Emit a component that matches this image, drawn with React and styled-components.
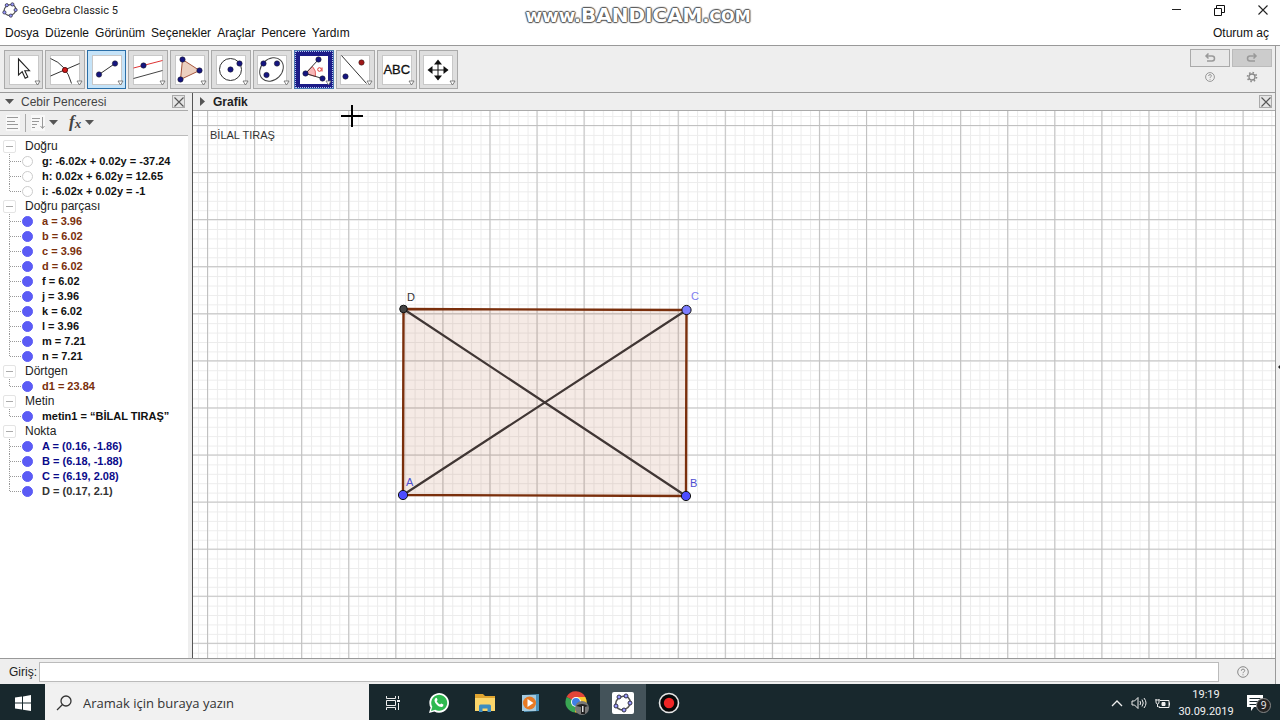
import { useState } from "react";
import styled, { createGlobalStyle } from "styled-components";

const NAVY = "#151580";

const menus = ["Dosya", "Düzenle", "Görünüm", "Seçenekler", "Araçlar", "Pencere", "Yardım"];

const groups = [
    {
        name: "Doğru",
        items: [
            { text: "g: -6.02x + 0.02y = -37.24", hidden: true },
            { text: "h: 0.02x + 6.02y = 12.65", hidden: true },
            { text: "i: -6.02x + 0.02y = -1", hidden: true },
        ],
    },
    {
        name: "Doğru parçası",
        items: [
            { text: "a = 3.96", color: "#7a2f0c" },
            { text: "b = 6.02", color: "#7a2f0c" },
            { text: "c = 3.96", color: "#7a2f0c" },
            { text: "d = 6.02", color: "#7a2f0c" },
            { text: "f = 6.02" },
            { text: "j = 3.96" },
            { text: "k = 6.02" },
            { text: "l = 3.96" },
            { text: "m = 7.21" },
            { text: "n = 7.21" },
        ],
    },
    { name: "Dörtgen", items: [{ text: "d1 = 23.84", color: "#7a2f0c" }] },
    { name: "Metin", items: [{ text: "metin1 = “BİLAL TIRAŞ”" }] },
    {
        name: "Nokta",
        items: [
            { text: "A = (0.16, -1.86)", color: "#0a0a8a" },
            { text: "B = (6.18, -1.88)", color: "#0a0a8a" },
            { text: "C = (6.19, 2.08)", color: "#0a0a8a" },
            { text: "D = (0.17, 2.1)", color: "#333" },
        ],
    },
];

const Dot = ({ x, y, fill = NAVY }) => (
    <circle cx={x} cy={y} r="2.7" fill={fill} stroke="#222" strokeWidth=".5" />
);

const tools = [
    { name: "Taşı", icon: <path d="M11 5.5v16l3.7-3.300 3 6.600 2.600-1.200-3-6.400h4.700z" fill="#fff" stroke="#222" strokeWidth="1.1" /> },
    {
        name: "Kesişim",
        icon: <>
            <path d="M2 5q16 6 21 25M2 22.500L31 10" fill="none" stroke="#333" />
            <circle cx="16.500" cy="16.500" r="2.600" fill="#d01818" stroke="#400" strokeWidth=".8" />
        </>,
    },
    {
        name: "Doğru parçası", active: true,
        icon: <><path d="M8.500 21L24.500 10" stroke="#333" /><Dot x={8.5} y={21} /><Dot x={24.5} y={10} /></>,
    },
    {
        name: "Paralel doğru",
        icon: <>
            <path d="M2 14.500L31 7" stroke="#d33" />
            <path d="M2 25L31 17" stroke="#444" />
            <Dot x={12} y={12} />
        </>,
    },
    {
        name: "Çokgen",
        icon: <>
            <path d="M9 6L26 17 7 26z" fill="#ecd0c0" stroke="#a4543c" />
            <Dot x={9} y={6} /><Dot x={26} y={17} /><Dot x={7} y={26} />
        </>,
    },
    {
        name: "Çember",
        icon: <><circle cx="16" cy="16" r="11" fill="none" stroke="#333" /><Dot x={16} y={16} /><Dot x={25} y={10} /></>,
    },
    {
        name: "Elips",
        icon: <>
            <ellipse cx="16" cy="16" rx="13" ry="10.500" transform="rotate(-45 16 16)" fill="none" stroke="#444" />
            <Dot x={8} y={10} /><Dot x={21.5} y={10} /><Dot x={11} y={21.5} />
        </>,
    },
    {
        name: "Açı", focused: true,
        icon: <>
            <path d="M8 20L15 13q4 4 3 10z" fill="#f8b8b8" stroke="#d44" strokeWidth=".8" />
            <path d="M21 6L8 20 25 25" fill="none" stroke="#333" />
            <circle cx="22" cy="16" r="1.800" fill="none" stroke="#d33" />
            <path d="M24.500 14v4" stroke="#d33" />
            <Dot x={21} y={6} /><Dot x={8} y={20} /><Dot x={25} y={25} />
        </>,
    },
    {
        name: "Yansıt",
        icon: <><path d="M3 2L28 30" stroke="#333" /><Dot x={7} y={23} /><Dot x={23} y={9} fill="#a01818" /></>,
    },
    { name: "Metin", label: "ABC" },
    {
        name: "Grafiği taşı",
        icon: <>
            <path d="M8 16.500h18M16.500 8v18" stroke="#111" />
            <path d="M16.500 6l4 5h-8zM16.500 27l4-5h-8zM6 16.500l5-4v8zM27 16.500l-5-4v8z" fill="#111" />
        </>,
    },
];

function GeoGebraLogo({ size }) {
    const points = [[6, 4], [13, 3], [17, 10], [11, 17], [3, 13]];
    return (
        <svg width={size} height={size} viewBox="0 0 20 20">
            <ellipse cx="10" cy="10" rx="7.500" ry="6.500" transform="rotate(-25 10 10)" fill="none" stroke="#555" strokeWidth="1.5" />
            {points.map(([x, y]) => <circle key={x} cx={x} cy={y} r="2" fill="#9999ff" stroke="#334" />)}
        </svg>
    );
}

function CloseIcon({ size = 10 }) {
    return (
        <svg width={size} height={size} viewBox="0 0 10 10">
            <path d="M.5.500l9 9M9.500.500l-9 9" stroke="currentColor" strokeWidth="1.1" />
        </svg>
    );
}

function HelpIcon({ size = 10 }) {
    return (
        <svg width={size} height={size} viewBox="0 0 12 12" fill="none" stroke="currentColor">
            <circle cx="6" cy="6" r="5.300" />
            <path d="M4.300 4.800q0-1.700 1.700-1.700t1.700 1.500q0 .9-1 1.400-.7.400-.7 1.200M6 8.300v1" />
        </svg>
    );
}

function Guide({ last }) {
    return (
        <svg width="12" height="15">
            <path d={last ? "M.5 0v8" : "M.5 0v15"} stroke="#999" strokeDasharray="1 1" />
            <path d="M1 7.500h11" stroke="#999" strokeDasharray="1 1" />
        </svg>
    );
}

function TitleBar() {
    return (
        <StyledTitleBar>
            <GeoGebraLogo size={16} />
            <h1>GeoGebra Classic 5</h1>
            <WindowButton type="button" aria-label="Küçült">
                <svg width="11" height="11"><path d="M1 4.500h9" stroke="#222" /></svg>
            </WindowButton>
            <WindowButton type="button" aria-label="Geri yükle">
                <svg width="11" height="11" fill="none" stroke="#111">
                    <path d="M.5 3.500h7v7h-7zM2.500 3V.5h8v7H8" />
                </svg>
            </WindowButton>
            <WindowButton type="button" aria-label="Kapat"><CloseIcon /></WindowButton>
            <Watermark>www.<b>BANDICAM</b>.<small>COM</small></Watermark>
        </StyledTitleBar>
    );
}

function ToolBar() {
    return (
        <StyledToolBar>
            <ToolList>
                {tools.map((tool) => (
                    <ToolButton key={tool.name} type="button" aria-label={tool.name} $active={tool.active} $focused={tool.focused}>
                        <ToolFace $focused={tool.focused}>
                            {tool.label ? tool.label : <svg width="30" height="30" viewBox="1.500 1.500 30 30">{tool.icon}</svg>}
                        </ToolFace>
                        <Corner width="7" height="6" viewBox="0 0 7 6">
                            <path d="M1 1h5L3.500 5z" fill="#fff" stroke="#666" strokeWidth=".8" />
                        </Corner>
                    </ToolButton>
                ))}
            </ToolList>
            <SideTools>
                <UndoButton type="button" aria-label="Geri al">
                    <svg width="12" height="10" fill="none" stroke="#999" strokeWidth="1.500">
                        <path d="M2 3h6q2.500 0 2.500 2.500T8 8H3M4.500.500L2 3l2.500 2.500" />
                    </svg>
                </UndoButton>
                <UndoButton type="button" aria-label="Yinele" $disabled>
                    <svg width="12" height="10" fill="none" stroke="#999" strokeWidth="1.500">
                        <path d="M10 3H4Q1.500 3 1.500 5.500T4 8h5M7.500.500L10 3 7.500 5.500" />
                    </svg>
                </UndoButton>
                <PlainButton type="button" aria-label="Yardım"><HelpIcon /></PlainButton>
                <PlainButton type="button" aria-label="Ayarlar">
                    <svg width="12" height="12" fill="none" stroke="#888">
                        <circle cx="6" cy="6" r="3" strokeWidth="1.300" />
                        <circle cx="6" cy="6" r="4.500" strokeWidth="1.600" strokeDasharray="1.500 2.030" />
                    </svg>
                </PlainButton>
            </SideTools>
        </StyledToolBar>
    );
}

function AlgebraPanel() {
    return (
        <StyledAlgebra>
            <PanelHeader>
                <Arrow />
                <h2>Cebir Penceresi</h2>
                <CloseButton type="button" aria-label="Cebir penceresini kapat"><CloseIcon /></CloseButton>
            </PanelHeader>
            <StyleBar>
                <StyleButton type="button" aria-label="Yardımcı nesneler">
                    <StyleIcon width="14" height="16" stroke="#999"><path d="M1 2.500h11M1 6.500h8M1 9.500h11M1 13.500h11" /></StyleIcon>
                </StyleButton>
                <Divider />
                <StyleButton type="button" aria-label="Sırala">
                    <StyleIcon width="14" height="16" fill="none" stroke="#999">
                        <path d="M1 3.500h8M1 6.500h7M1 9.500h5M1 12.500h3M11.500 2v11M9.500 11l2 2.500 2-2.500" />
                    </StyleIcon>
                    <Arrow />
                </StyleButton>
                <StyleButton type="button"><em>f<sub>x</sub></em><Arrow /></StyleButton>
            </StyleBar>
            <Tree>
                {groups.map((group) => (
                    <li key={group.name}>
                        <GroupRow>
                            <Toggle type="button" aria-label={group.name} />
                            {group.name}
                        </GroupRow>
                        <ul>
                            {group.items.map((item, i) => (
                                <TreeItem key={item.text} item={item} last={i === group.items.length - 1} />
                            ))}
                        </ul>
                    </li>
                ))}
            </Tree>
        </StyledAlgebra>
    );
}

function TreeItem({ item, last }) {
    const [visible, setVisible] = useState(!item.hidden);

    return (
        <li>
            <ItemRow $color={item.color}>
                <Guide last={last} />
                <input type="checkbox" checked={visible} onChange={() => setVisible(!visible)} />
                {item.text}
            </ItemRow>
        </li>
    );
}

function Arrow() {
    return <svg width="9" height="6"><path d="M0 0h9L4.500 5z" fill="#555" /></svg>;
}

function GraphicsPanel() {
    return (
        <StyledGraphics>
            <PanelHeader $bold>
                <svg width="6" height="9"><path d="M0 0v9l5-4.500z" fill="#555" /></svg>
                <h2>Grafik</h2>
                <CloseButton type="button" aria-label="Grafiği kapat"><CloseIcon /></CloseButton>
            </PanelHeader>
            <Sheet>
                <svg width="100%" height="100%">
                    <defs>
                        <pattern id="minor" x="14.500" y="14.500" width="9.414" height="9.414" patternUnits="userSpaceOnUse">
                            <path d="M0 .5h9.414M.5 0v9.414" stroke="#ececec" />
                        </pattern>
                        <pattern id="major" x="14" y="14" width="47.070" height="47.070" patternUnits="userSpaceOnUse">
                            <path d="M0 .5h47.070M.5 0v47.070" stroke="#c0c0c0" />
                        </pattern>
                    </defs>
                    <rect width="100%" height="100%" fill="url(#minor)" />
                    <rect width="100%" height="100%" fill="url(#major)" />
                    <path d="M210 384L493 385 493.500 199 210.500 198z" fill="#993300" fillOpacity=".1" stroke="#7a2f0c" strokeWidth="2.400" />
                    <path d="M210 384L493.500 199M210.500 198L493 385" stroke="#403634" strokeWidth="2.200" />
                    <g stroke="#111">
                        <circle cx="210" cy="384" r="4.600" fill="#4d4dff" />
                        <circle cx="493" cy="385" r="4.600" fill="#4d4dff" />
                        <circle cx="493.500" cy="199" r="4.600" fill="#7d7dff" />
                        <circle cx="210.500" cy="198" r="3.800" fill="#444" />
                    </g>
                    <SheetText x="17" y="28">BİLAL TIRAŞ</SheetText>
                    <SheetText x="213" y="375" $color="#4d4dd0">A</SheetText>
                    <SheetText x="497" y="376" $color="#4d4dd0">B</SheetText>
                    <SheetText x="498" y="189" $color="#7d7df0">C</SheetText>
                    <SheetText x="214" y="190">D</SheetText>
                </svg>
                <Crosshair width="22" height="22"><path d="M0 11h22M11 0v22" stroke="#000" strokeWidth="2" /></Crosshair>
            </Sheet>
        </StyledGraphics>
    );
}

function TaskBar() {
    return (
        <StyledTaskBar>
            <TaskButton type="button" aria-label="Başlat" $width={45}>
                <svg width="16" height="16" fill="#fff">
                    <path d="M0 2.500l7-1v6H0zM8 1.400L16 0v7.500H8zM0 8.500h7v6l-7-1zM8 8.500h8V16l-8-1.300z" />
                </svg>
            </TaskButton>
            <SearchBox>
                <svg width="16" height="16" fill="none" stroke="#333" strokeWidth="1.300">
                    <circle cx="10" cy="6" r="5" /><path d="M6.500 9.500L1 15" />
                </svg>
                <input type="text" aria-label="Ara" placeholder="Aramak için buraya yazın" />
            </SearchBox>
            <TaskButton type="button" aria-label="Görev görünümü" $width={47}>
                <svg width="16" height="16" fill="none" stroke="#eee">
                    <path d="M1.500 1v2.500h9V1M1.500 5.500h9v5h-9zM1.500 15v-2.500h9V15M13.500 1v3M13.500 8v7" />
                    <path d="M12 6h3" strokeWidth="2" />
                </svg>
            </TaskButton>
            <TaskButton type="button" aria-label="WhatsApp">
                <svg width="22" height="22" viewBox="0 0 22 22">
                    <path d="M1 21l1.600-5.400A9.800 9.800 0 1 1 6.400 19.400z" fill="#fff" />
                    <path d="M3 19l1.300-4.200a8 8 0 1 1 2.900 2.900z" fill="#2fb950" />
                    <path d="M7.500 6.200c.8-.7 1.300-.3 1.500.3l.6 1.500-.9 1.300q1.200 2.300 3.300 3.300l1.200-1.200 2.200 1.100q.3 2-1.700 2.500c-3 .3-7-3.500-7.200-6.500q0-1.400 1-2.300z" fill="#fff" />
                </svg>
            </TaskButton>
            <TaskButton type="button" aria-label="Dosya Gezgini">
                <svg width="22" height="20" viewBox="0 0 22 20">
                    <path d="M1 1h8l2 2h10v15H1z" fill="#e0a530" />
                    <path d="M1 5h20v13H1z" fill="#fbd66b" />
                    <path d="M5 19v-6q0-1.500 1.500-1.500h9Q17 11.500 17 13v6h-3.500v-3.500h-5V19z" fill="#3c8cc0" />
                </svg>
            </TaskButton>
            <TaskButton type="button" aria-label="Medya oynatıcı">
                <svg width="20" height="20" viewBox="0 0 20 20">
                    <path d="M3 2l15-1v17l-15 1z" fill="#4b91b8" />
                    <path d="M1 2h14v16H1z" fill="#a5cbe0" />
                    <circle cx="8.500" cy="10" r="6.500" fill="#e87a24" />
                    <path d="M6.500 6v8l6-4z" fill="#fff" />
                </svg>
            </TaskButton>
            <TaskButton type="button" aria-label="Chrome">
                <svg width="24" height="24" viewBox="0 0 24 24">
                    <path d="M11 11L1.500 6A10.500 10.500 0 0 1 20.500 6.500z" fill="#e24538" />
                    <path d="M11 11L1.700 6A10.500 10.500 0 0 0 10 21.500z" fill="#39a653" />
                    <path d="M11 11l-1 10.500A10.500 10.500 0 0 0 20.300 6H11z" fill="#fbcb30" />
                    <circle cx="11" cy="11" r="5" fill="#fff" />
                    <circle cx="11" cy="11" r="4" fill="#3f7fe6" />
                    <circle cx="17" cy="17" r="7" fill="#777" />
                    <path d="M11 15q6-4 12 0l-3 1v7h-4v-7z" fill="#222" />
                    <path d="M17 15h1.500v6H17z" fill="#ddd" />
                </svg>
            </TaskButton>
            <TaskButton type="button" aria-label="GeoGebra" $active>
                <AppTile><GeoGebraLogo size={20} /></AppTile>
            </TaskButton>
            <TaskButton type="button" aria-label="Bandicam">
                <svg width="22" height="22">
                    <circle cx="11" cy="11" r="9.500" fill="#080808" stroke="#e6e6e6" strokeWidth="1.600" />
                    <circle cx="11" cy="11" r="5.200" fill="#f02525" />
                </svg>
            </TaskButton>
            <Tray>
                <svg width="12" height="8" fill="none" stroke="#eee" strokeWidth="1.300"><path d="M1 7l5-5 5 5" /></svg>
                <svg width="16" height="14" fill="none" stroke="#eee">
                    <path d="M1 5h2.500L7 1.500v11L3.500 9H1zM9 5q1.200 2 0 4M11 3.500q2.500 3.500 0 7M13 2q4 5 0 10" />
                </svg>
                <svg width="16" height="13" fill="none" stroke="#eee">
                    <path d="M5 3.500h9v7H4V9M14.500 5.500v3" /><path d="M7 5.500h3v3H7z" fill="#eee" />
                    <path d="M1 2v3q0 2 1.500 2T4 5V2M.5 3h4M2.500 7v3" />
                </svg>
                <Clock><span>19:19</span><span>30.09.2019</span></Clock>
                <Notifications type="button" aria-label="Bildirimler">
                    <svg width="16" height="16">
                        <path d="M0 0h16v12H7l-3 4v-4H0z" fill="#fff" />
                        <path d="M2.500 3.500h11M2.500 6.500h11M2.500 9.500h7" stroke="#1c2a2f" />
                    </svg>
                    <Badge>9</Badge>
                </Notifications>
            </Tray>
        </StyledTaskBar>
    );
}

export default function App() {
    return (
        <>
            <GlobalStyle />
            <Desktop>
                <TitleBar />
                <MenuBar>
                    {menus.map((menu) => <MenuButton key={menu} type="button">{menu}</MenuButton>)}
                    <MenuButton type="button" $right>Oturum aç</MenuButton>
                </MenuBar>
                <Body>
                    <ToolBar />
                    <Panels>
                        <AlgebraPanel />
                        <GraphicsPanel />
                    </Panels>
                    <InputBar>
                        <label htmlFor="giris">Giriş:</label>
                        <input id="giris" type="text" />
                        <PlainButton type="button" aria-label="Giriş yardımı"><HelpIcon size={12} /></PlainButton>
                    </InputBar>
                    <EdgeMark width="2" height="4"><path d="M2 0v4L0 2z" fill="#222" /></EdgeMark>
                </Body>
                <TaskBar />
            </Desktop>
        </>
    );
}

const GlobalStyle = createGlobalStyle`
    * {
        box-sizing: border-box;
    }
    body {
        margin: 0;
        overflow: hidden;
        font-family: "Liberation Sans", Arial, sans-serif;
        font-size: 12px;
        color: #222;
    }
    button, input {
        font: inherit;
        color: inherit;
        margin: 0;
        padding: 0;
        border: none;
        background: none;
    }
    ul {
        margin: 0;
        padding: 0;
        list-style: none;
    }
    h1, h2 {
        margin: 0;
        font-size: inherit;
        font-weight: inherit;
    }
    svg {
        display: block;
        flex: none;
    }
`;

const Desktop = styled.div`
    height: 100vh;
    display: flex;
    flex-direction: column;
    background: #fff;
`;

const StyledTitleBar = styled.header`
    position: relative;
    height: 20px;
    display: flex;
    align-items: center;
    padding-left: 2px;
    h1{
        flex: 1;
        margin-left: 4px;
        font-family: Roboto, sans-serif;
        font-size: 11px;
    }
`;

const WindowButton = styled.button`
    width: 43px;
    height: 20px;
    display: grid;
    place-items: center;
    &:last-of-type{
        margin-right: -4px;
    }
`;

const Watermark = styled.div`
    position: absolute;
    top: 3px;
    left: 50%;
    width: 240px;
    margin-left: -122px;
    display: flex;
    align-items: baseline;
    justify-content: center;
    font-family: "DejaVu Sans", sans-serif;
    font-size: 18px;
    font-weight: 700;
    line-height: 24px;
    color: #fff;
    text-shadow: 1px 0 1px #555, -1px 0 1px #555, 0 1px 1px #555, 0 -1px 1px #555, 0 0 2px #555;
    b{
        font-size: 20px;
    }
    small{
        font-size: 16px;
    }
`;

const MenuBar = styled.nav`
    height: 26px;
    display: flex;
    align-items: center;
    gap: 6px;
    padding: 1px 11px 0 5px;
    border-bottom: 1px solid #999;
    color: #111;
`;

const MenuButton = styled.button`
    margin-left: ${({ $right }) => ($right ? "auto" : "0")};
`;

const Body = styled.main`
    position: relative;
    flex: 1;
    min-height: 0;
    display: flex;
    flex-direction: column;
    margin-right: 4px;
    border-right: 1px solid #999;
    background: #eee;
    box-shadow: 4px 0 #f0f0f0;
`;

const EdgeMark = styled.svg`
    position: absolute;
    right: -5px;
    top: 50%;
`;

const StyledToolBar = styled.div`
    height: 47px;
    display: flex;
    justify-content: space-between;
    align-items: flex-start;
    padding: 4px 3px 0 4px;
    border-bottom: 1px solid #999;
`;

const ToolList = styled.div`
    display: grid;
    grid-template-columns: repeat(11, 1fr);
    gap: 2px;
    width: 454px;
`;

const ToolButton = styled.button`
    position: relative;
    height: 39px;
    display: grid;
    place-items: center;
    border: 1px solid ${({ $active, $focused }) => ($active ? "#2a6fa8" : $focused ? "#4a78b0" : "#aaa")};
    background: ${({ $active, $focused }) => ($active ? "#c5e3f8" : $focused ? "#1c1c88" : "#dedede")};
    outline: ${({ $focused }) => ($focused ? "1px dotted #b8c8f0" : "none")};
    outline-offset: -2px;
`;

const ToolFace = styled.span`
    width: ${({ $focused }) => ($focused ? "28px" : "30px")};
    height: ${({ $focused }) => ($focused ? "28px" : "30px")};
    display: flex;
    align-items: center;
    justify-content: center;
    box-shadow: inset 0 0 0 1px ${({ $focused }) => ($focused ? "#fff" : "#c8c8c8")};
    background: #fff;
    font-size: 13px;
    -webkit-text-stroke: .3px #111;
    color: #111;
`;

const Corner = styled.svg`
    position: absolute;
    right: 1px;
    bottom: 2px;
`;

const SideTools = styled.div`
    display: grid;
    grid-template-columns: 40px 40px;
    grid-template-rows: 18px 18px;
    gap: 1px 2px;
    margin-top: -1px;
`;

const UndoButton = styled.button`
    display: grid;
    place-items: center;
    border: 1px solid ${({ $disabled }) => ($disabled ? "#bbb" : "#aaa")};
    background: ${({ $disabled }) => ($disabled ? "#ccc" : "#e8e8e8")};
`;

const PlainButton = styled.button`
    display: grid;
    place-items: center;
    color: #888;
`;

const Panels = styled.div`
    flex: 1;
    min-height: 0;
    display: flex;
`;

const StyledAlgebra = styled.section`
    width: 193px;
    display: flex;
    flex-direction: column;
    padding-right: 4px;
    border-right: 1px solid #555;
`;

const PanelHeader = styled.div`
    height: 18px;
    display: flex;
    align-items: center;
    gap: 7px;
    padding: 0 3px 0 ${({ $bold }) => ($bold ? "7px" : "5px")};
    border-bottom: 1px solid #aaa;
    h2{
        flex: 1;
        font-weight: ${({ $bold }) => ($bold ? 700 : 400)};
        color: ${({ $bold }) => ($bold ? "#222" : "#444")};
    }
`;

const CloseButton = styled.button`
    width: 13px;
    height: 13px;
    display: grid;
    place-items: center;
    border: 1px solid #aaa;
    color: #555;
    background: #e4e4e4;
`;

const StyleBar = styled.div`
    height: 25px;
    display: flex;
    align-items: center;
    gap: 5px;
    padding-left: 6px;
    border-bottom: 1px solid #bbb;
`;

const StyleButton = styled.button`
    display: flex;
    align-items: center;
    gap: 4px;
    em{
        padding-left: 6px;
        font-family: "Liberation Serif", serif;
        font-size: 17px;
        font-weight: 700;
        line-height: 18px;
        color: #444;
    }
    sub{
        font-size: 13px;
        vertical-align: -1px;
    }
`;

const StyleIcon = styled.svg`
    background: #f8f8f8;
`;

const Divider = styled.span`
    width: 1px;
    height: 18px;
    background: #aaa;
`;

const Tree = styled.ul`
    flex: 1;
    padding-top: 3px;
    background: #fff;
    line-height: 15px;
`;

const GroupRow = styled.div`
    height: 15px;
    display: flex;
    align-items: center;
    gap: 9px;
    padding-left: 3px;
`;

const Toggle = styled.button`
    width: 13px;
    height: 13px;
    display: grid;
    place-items: center;
    border: 1px solid #e4e4e4;
    border-radius: 2px;
    &::after{
        content: "";
        width: 7px;
        height: 1px;
        background: #aaa;
    }
`;

const ItemRow = styled.label`
    height: 15px;
    display: flex;
    align-items: center;
    padding-left: 9px;
    font-size: 11px;
    font-weight: 700;
    color: ${({ $color }) => $color || "#111"};
    input{
        appearance: none;
        width: 11px;
        height: 11px;
        margin-right: 9px;
        margin-left: 1px;
        border: 1px solid #ccc;
        border-radius: 50%;
    }
    input:checked{
        border-color: #5b5bf5;
        background: #5b5bf5;
    }
`;

const StyledGraphics = styled.section`
    flex: 1;
    min-width: 0;
    display: flex;
    flex-direction: column;
`;

const Sheet = styled.div`
    position: relative;
    flex: 1;
    min-height: 0;
    background: #fff;
    > svg:first-child{
        position: absolute;
        inset: 0;
    }
`;

const SheetText = styled.text`
    font-size: 11px;
    fill: ${({ $color }) => $color || "#333"};
`;

const Crosshair = styled.svg`
    position: absolute;
    left: 148px;
    top: -6px;
`;

const InputBar = styled.div`
    height: 26px;
    display: grid;
    grid-template-columns: 26px 1fr 40px;
    gap: 4px;
    align-items: center;
    padding: 0 12px 0 9px;
    border-top: 1px solid #999;
    input{
        height: 20px;
        border: 1px solid #bbb;
        background: #fff;
    }
`;

const StyledTaskBar = styled.footer`
    height: 36px;
    display: flex;
    background: #18282d;
    color: #f2f2f2;
    font-family: "Open Sans", sans-serif;
`;

const TaskButton = styled.button`
    width: ${({ $width }) => $width || 46}px;
    display: grid;
    place-items: center;
    padding-top: 2px;
    background: ${({ $active }) => ($active ? "#44535a" : "none")};
`;

const SearchBox = styled.div`
    width: 324px;
    display: flex;
    align-items: center;
    gap: 11px;
    padding: 2px 0 0 11px;
    background: #f1f1f1;
    color: #333;
    input{
        flex: 1;
        min-width: 0;
        font-size: 13px;
    }
    input::placeholder{
        color: #333;
        opacity: 1;
    }
`;

const AppTile = styled.span`
    width: 22px;
    height: 22px;
    display: grid;
    place-items: center;
    border-radius: 2px;
    background: #fff;
`;

const Tray = styled.div`
    margin-left: auto;
    display: flex;
    align-items: center;
    gap: 8px;
    padding: 2px 9px 0 0;
`;

const Clock = styled.time`
    width: 54px;
    display: flex;
    flex-direction: column;
    align-items: center;
    line-height: 17px;
    font-family: Roboto, sans-serif;
    font-size: 11px;
`;

const Notifications = styled.button`
    position: relative;
    width: 24px;
    margin-left: 6px;
`;

const Badge = styled.span`
    position: absolute;
    right: 0;
    top: 3px;
    width: 15px;
    height: 15px;
    border: 1px solid #888;
    border-radius: 50%;
    background: #222;
    font-size: 10px;
    line-height: 13px;
    text-align: center;
`;
